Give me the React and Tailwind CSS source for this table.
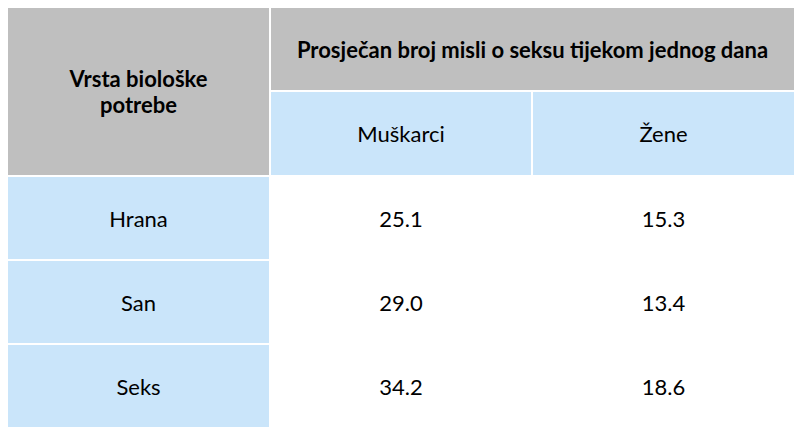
import React from "react";

const rows = [
  { name: "Hrana", men: "25.1", women: "15.3" },
  { name: "San", men: "29.0", women: "13.4" },
  { name: "Seks", men: "34.2", women: "18.6" },
];

const App = () => {
  return (
    <div
      className="w-[800px] h-[435px] bg-white p-2 text-black"
      style={{ fontFamily: "Lato, 'Open Sans', sans-serif" }}
    >
      <div className="grid grid-cols-[261px_260px_261px] grid-rows-[82px_83px_82px_82px_82px] gap-[2px] text-[22px]">
        {/* Header */}
        <div className="row-span-2 bg-[#bfbfbf] flex items-center justify-center text-center font-bold leading-[26px] px-12">
          Vrsta biološke potrebe
        </div>
        <div className="col-span-2 bg-[#bfbfbf] flex items-center justify-center font-bold">
          Prosječan broj misli o seksu tijekom jednog dana
        </div>
        <div className="bg-[#cae5fa] flex items-center justify-center">
          Muškarci
        </div>
        <div className="bg-[#cae5fa] flex items-center justify-center">
          Žene
        </div>

        {/* Body */}
        {rows.map((r) => (
          <React.Fragment key={r.name}>
            <div className="bg-[#cae5fa] flex items-center justify-center">
              {r.name}
            </div>
            <div className="bg-white flex items-center justify-center">
              {r.men}
            </div>
            <div className="bg-white flex items-center justify-center">
              {r.women}
            </div>
          </React.Fragment>
        ))}
      </div>
    </div>
  );
};

export default App;
